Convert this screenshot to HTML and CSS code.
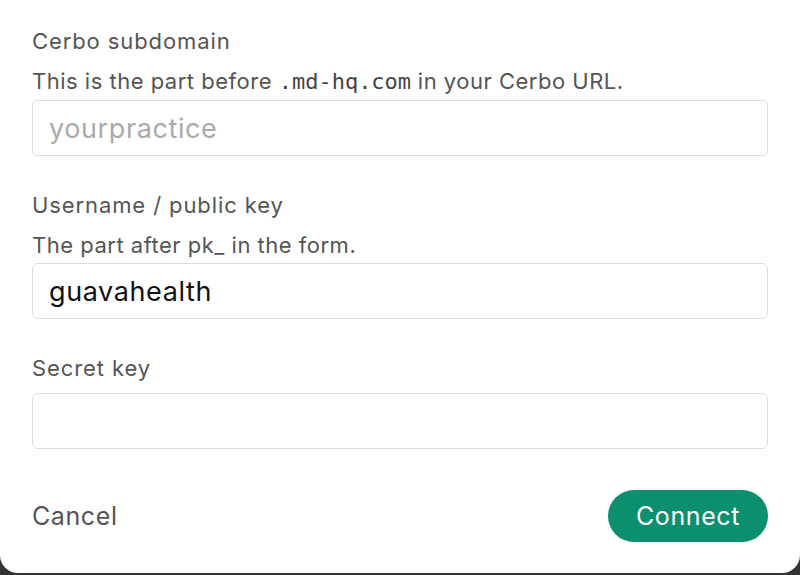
FILE: index.html
```html
<!DOCTYPE html>
<html lang="en">
<head>
    <meta charset="UTF-8">
    <meta name="viewport" content="width=device-width, initial-scale=1.0">
    <title>Connect Cerbo</title>
    <link rel="stylesheet" href="styles.css">
</head>
<body>
    <div class="dialog">
        <form class="connect-form" onsubmit="return false;">
            <div class="field">
                <label class="field-label" for="subdomain">Cerbo subdomain</label>
                <p class="field-hint">This is the part before <code>.md-hq.com</code> in your Cerbo URL.</p>
                <input class="text-input" type="text" id="subdomain" placeholder="yourpractice">
            </div>

            <div class="field">
                <label class="field-label" for="public-key">Username / public key</label>
                <p class="field-hint">The part after pk_ in the form.</p>
                <input class="text-input" type="text" id="public-key" value="guavahealth">
            </div>

            <div class="field">
                <label class="field-label" for="secret-key">Secret key</label>
                <input class="text-input" type="password" id="secret-key">
            </div>

            <div class="actions">
                <button type="button" class="cancel-button">Cancel</button>
                <button type="submit" class="connect-button">Connect</button>
            </div>
        </form>
    </div>
</body>
</html>
```

FILE: styles.css
```css
body {
    margin: 0;
    background-color: #333;
    font-family: "Inter", "Liberation Sans", sans-serif;
}

.dialog {
    height: 573px;
    box-sizing: border-box;
    padding: 26px 32px 0 32px;
    background-color: #fff;
    border-radius: 0 0 18px 18px;
}

.field {
    display: flex;
    flex-direction: column;
}

.field + .field {
    margin-top: 34px;
}

.field-label {
    font-size: 22px;
    line-height: 30px;
    letter-spacing: 0.9px;
    color: #555;
}

.field-hint {
    margin: 10px 0 0 0;
    font-size: 22px;
    line-height: 30px;
    letter-spacing: 0.5px;
    color: #555;
}

.field-hint code {
    font-family: "DejaVu Sans Mono", "Liberation Mono", monospace;
    font-size: 22px;
    letter-spacing: 0;
    color: #444;
}

.text-input {
    height: 56px;
    box-sizing: border-box;
    margin-top: 10px;
    padding: 0 16px;
    border: 1px solid #ddd;
    border-radius: 6px;
    font-family: inherit;
    font-size: 27px;
    letter-spacing: 0.6px;
    color: #111;
    outline: none;
}

.field-hint + .text-input {
    margin-top: 3px;
}

.text-input::placeholder {
    color: #aaa;
}

.actions {
    display: flex;
    justify-content: space-between;
    align-items: center;
    margin-top: 41px;
}

.cancel-button {
    padding: 0;
    border: none;
    background: none;
    font-family: inherit;
    font-size: 25px;
    letter-spacing: 0.6px;
    color: #555;
    cursor: pointer;
}

.connect-button {
    width: 160px;
    height: 52px;
    border: none;
    border-radius: 26px;
    background-color: #0b8f6e;
    font-family: inherit;
    font-size: 25px;
    letter-spacing: 0.6px;
    color: #fff;
    cursor: pointer;
}
```
